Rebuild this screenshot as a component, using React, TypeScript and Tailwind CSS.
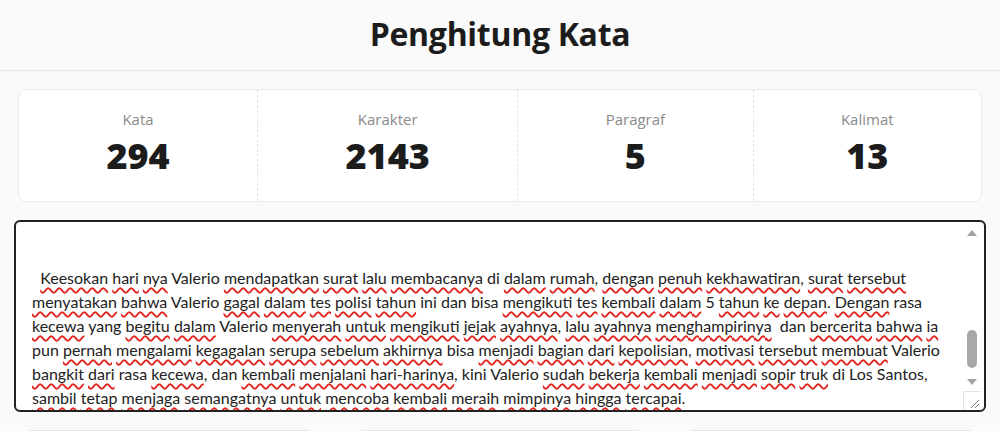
import { Fragment } from 'react';

const stats = [
  { label: 'Kata', value: '294' },
  { label: 'Karakter', value: '2143' },
  { label: 'Paragraf', value: '5' },
  { label: 'Kalimat', value: '13' },
];

// "~" marks a word the spellchecker flags
const lines = [
  '  ~Keesokan ~hari ~nya Valerio ~mendapatkan ~surat ~lalu ~membacanya di ~dalam ~rumah, ~dengan ~penuh ~kekhawatiran, ~surat ~tersebut',
  '~menyatakan ~bahwa Valerio ~gagal ~dalam ~tes ~polisi ~tahun ini dan bisa ~mengikuti ~tes ~kembali ~dalam 5 ~tahun ~ke ~depan. ~Dengan rasa',
  '~kecewa yang ~begitu ~dalam Valerio ~menyerah ~untuk ~mengikuti ~jejak ~ayahnya, ~lalu ~ayahnya ~menghampirinya  dan ~bercerita ~bahwa ~ia',
  'pun ~pernah ~mengalami ~kegagalan ~serupa ~sebelum ~akhirnya bisa ~menjadi ~bagian ~dari ~kepolisian, ~motivasi ~tersebut ~membuat Valerio',
  '~bangkit ~dari rasa ~kecewa, dan ~kembali ~menjalani ~hari-harinya, kini Valerio ~sudah ~bekerja ~kembali ~menjadi ~sopir ~truk di Los Santos,',
  '~sambil ~tetap ~menjaga ~semangatnya ~untuk ~mencoba ~kembali ~meraih ~mimpinya ~hingga ~tercapai.',
];

const Line = ({ text }: { text: string }) => {
  const parts = text.split(/( +)/);
  return (
    <div className="whitespace-pre">
      {parts.map((p, i) => {
        if (!p.startsWith('~')) return <Fragment key={i}>{p}</Fragment>;
        const m = p.slice(1).match(/^(.*?)([,.]*)$/)!;
        return (
          <Fragment key={i}>
            <span className="underline decoration-wavy decoration-[#e0271f] decoration-[1.5px] underline-offset-[3px]">{m[1]}</span>
            {m[2]}
          </Fragment>
        );
      })}
    </div>
  );
};

const Arrow = ({ up }: { up?: boolean }) => (
  <svg width="10" height="6" viewBox="0 0 10 6">
    <path d={up ? 'M0 6 L5 0 L10 6 Z' : 'M0 0 L10 0 L5 6 Z'} fill="#a3a3a3" />
  </svg>
);

export default function App() {
  return (
    <div className="min-h-screen bg-[#fafafa] font-['Open_Sans','Noto_Sans',sans-serif] text-[#1c1c1c]">
      <header className="h-[71px] border-b border-[#e6e6e6] flex items-center justify-center">
        <h1 className="text-[32px] font-bold tracking-[-0.3px] leading-none pb-[2px]">Penghitung Kata</h1>
      </header>

      <main>
        <section className="mx-[18px] mt-[18px] h-[113px] flex rounded-lg border border-[#e9e9e9] bg-white">
          {stats.map((s, i) => (
            <div
              key={s.label}
              className={`flex-auto flex flex-col items-center pt-[18px] ${i > 0 ? 'border-l border-dashed border-[#e3e3e3]' : ''}`}
            >
              <div className="text-[15px] leading-[22px] text-[#8a8a8a]">{s.label}</div>
              <div className="text-[36px] leading-[44px] font-extrabold mt-[4px]">{s.value}</div>
            </div>
          ))}
        </section>

        <section className="mx-[14px] mt-[18px] h-[192px] flex rounded-md border-2 border-[#222] bg-white overflow-hidden">
          <div className="flex-1 overflow-hidden pl-4 pt-[44px] font-['Lato',sans-serif] text-[16px] leading-6 text-[#222]">
            {lines.map((l, i) => (
              <Line key={i} text={l} />
            ))}
          </div>
          <div className="w-[18px] mr-[3px] flex flex-col">
            <div className="h-[22px] flex items-center justify-center">
              <Arrow up />
            </div>
            <div className="flex-1 flex justify-center">
              <div className="mt-[86px] w-[10px] h-[38px] rounded-full bg-[#a8a8a8]" />
            </div>
            <div className="h-[18px] flex items-center justify-center">
              <Arrow />
            </div>
            <div className="h-[19px] border-l border-t border-[#e2e2e2] bg-white flex items-end justify-end p-[2px]">
              <svg width="10" height="10" viewBox="0 0 10 10">
                <path d="M2 10 L10 2 M6 10 L10 6" stroke="#7a7a7a" strokeWidth="1" />
              </svg>
            </div>
          </div>
        </section>

        <section className="mx-6 mt-[18px] grid grid-cols-3 gap-10 pb-6">
          {[0, 1, 2].map((k) => (
            <div key={k} className="h-[80px] rounded-lg border border-[#e6e6e6] bg-white" />
          ))}
        </section>
      </main>
    </div>
  );
}
